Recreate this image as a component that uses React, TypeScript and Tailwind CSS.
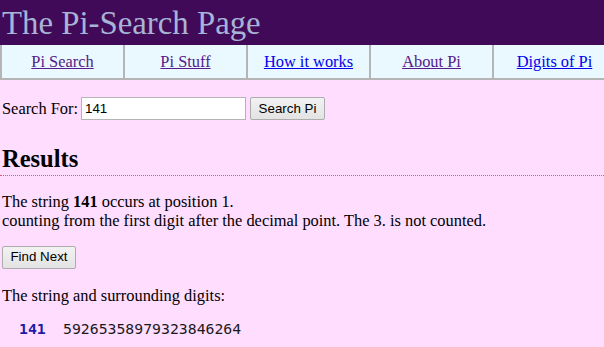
export default function App() {
  const navLinks = [
    { label: 'Pi Search', visited: true },
    { label: 'Pi Stuff', visited: true },
    { label: 'How it works', visited: false },
    { label: 'About Pi', visited: true },
    { label: 'Digits of Pi', visited: false },
  ];

  return (
    <div className="w-full min-h-screen overflow-hidden bg-[#ffddff] font-['Liberation_Serif',serif] text-[16.4px] text-black">
      {/* Title bar */}
      <div className="h-[45px] bg-[#400a58] pt-[5px] pl-[2px]">
        <h1 className="text-[32.8px] leading-[37px] font-normal text-[#a6b4d6]">The Pi-Search Page</h1>
      </div>

      {/* Nav table */}
      <div className="flex w-[620px] h-[35px] bg-[#eaf8ff] border-l-2 border-b-2 border-[#b5b5b5]">
        {navLinks.map((link) => (
          <div
            key={link.label}
            className="w-[123px] shrink-0 flex items-center justify-center border-r-2 border-[#b5b5b5]"
          >
            <a
              href="#"
              className={`underline leading-[18px] ${link.visited ? 'text-[#551a8b]' : 'text-[#0000ee]'}`}
            >
              {link.label}
            </a>
          </div>
        ))}
      </div>

      {/* Search form */}
      <div className="flex items-center mt-[17px] px-[2px] h-[23px]">
        <span className="leading-[19px]">Search For:</span>
        <input
          type="text"
          defaultValue="141"
          className="ml-[3px] w-[165px] h-[23px] bg-white border border-[#b4b4b4] px-[3px] font-['Liberation_Sans',Arial,sans-serif] text-[13.33px] text-black outline-none"
        />
        <button className="ml-[4px] w-[75px] h-[23px] rounded-[2px] border border-[#acacac] bg-gradient-to-b from-[#f2f2f2] to-[#e3e3e3] font-['Liberation_Sans',Arial,sans-serif] text-[13.33px] text-black">
          Search Pi
        </button>
      </div>

      {/* Results */}
      <h2 className="mt-[25px] px-[2px] pb-[2px] text-[24.5px] leading-[28px] font-bold border-b border-dotted border-[#f0506e]">
        Results
      </h2>

      <p className="mt-[16px] px-[2px] leading-[19px]">
        The string <b>141</b> occurs at position 1.
        <br />
        counting from the first digit after the decimal point. The 3. is not counted.
      </p>

      <div className="mt-[14px] px-[2px]">
        <button className="w-[74px] h-[23px] rounded-[2px] border border-[#acacac] bg-gradient-to-b from-[#f2f2f2] to-[#e3e3e3] font-['Liberation_Sans',Arial,sans-serif] text-[13.33px] text-black">
          Find Next
        </button>
      </div>

      <p className="mt-[17px] px-[2px] leading-[19px]">The string and surrounding digits:</p>

      <div className="mt-[15px] flex font-['DejaVu_Sans_Mono',monospace] text-[14.8px] leading-[18px]">
        <span className="ml-[19px] w-[44px] font-bold text-[#1c1ca6]">141</span>
        <span className="text-[#1a1a1a]">59265358979323846264</span>
      </div>
    </div>
  );
}
